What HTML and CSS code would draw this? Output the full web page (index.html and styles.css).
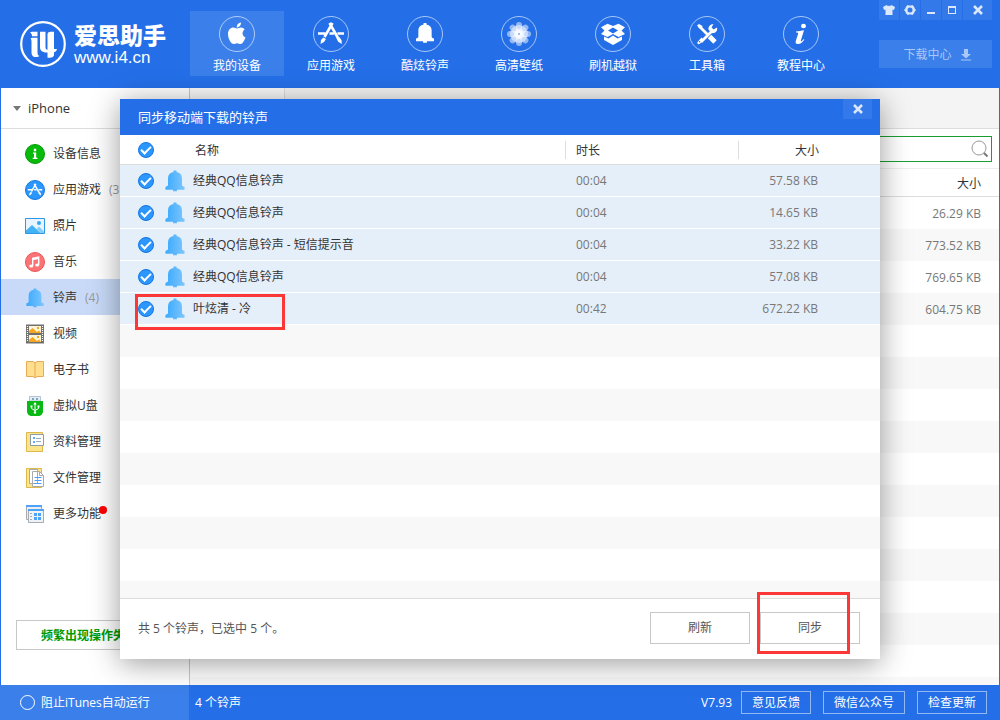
FILE: index.html
```html
<!DOCTYPE html>
<html lang="zh-CN">
<head>
<meta charset="utf-8">
<title>爱思助手</title>
<link rel="stylesheet" href="styles.css">
</head>
<body>
<svg class="defs" aria-hidden="true">
  <defs>
    <linearGradient id="bellFill" x1="0" y1="0" x2="1" y2="0">
      <stop offset="0" stop-color="#3ba9fd"/><stop offset="1" stop-color="#7cc6ff"/>
    </linearGradient>
    <symbol id="bell" viewBox="0 0 20 22">
      <path d="M8.500 2V.5h3V2c3.500.6 5.500 3 5.500 6.200v6.300c0 1.500.8 2 2.500 2.200v3h-7.500v1.500H8v-1.500H.5v-3c1.700-.2 2.500-.7 2.500-2.200V8.200C3 5 5 2.600 8.500 2z"/>
    </symbol>
    <symbol id="appA" viewBox="0 0 36 36">
      <g fill="none" stroke="currentColor" stroke-width="2.600">
        <path d="M19.500 7L11.500 21M16.500 7l8.500 15"/>
        <path d="M5 17.500h7.500M16.500 17.500h4.500M24.500 17.500H31"/>
      </g>
      <path d="M10.200 21.500l2.800 1.500-2 3-3.500 2 .5-4zM26.200 21l-2.700 1.600 1.700 3.200 3.600 2.200-.3-4z" fill="currentColor"/>
    </symbol>
  </defs>
</svg>

<div class="app">
  <header class="topbar">
    <div class="brand">
      <svg class="brand-mark" viewBox="0 0 46 46" aria-hidden="true">
        <circle cx="23" cy="23" r="21.800" fill="none" stroke="#fff" stroke-width="2.200"/>
        <path fill="#fff" d="M10 11.500l2-.8h5.500v4.500h-5.500c0-1.500-.5-2.800-2-3.700zM10.500 17.500l1.500-.8h5.500v14c0 2.500.5 3.800 2 4.300-2.500 2-8 1.500-8-3V20.500c0-1.500-.3-2.300-1-3zM20 10.700h5.500v15c0 2 .5 2.800 2 3V13.500c0-2 1-2.800 3-2.800h3.500V28h3c-.3 1.500-1 3-3 3.300V34c0 2-2.500 2.800-6.500 2.800V31.500c-5 0-7.500-1.500-7.500-5.500z"/>
      </svg>
      <div class="brand-text">
        <strong class="brand-name">爱思助手</strong>
        <span class="brand-url">www.i4.cn</span>
      </div>
    </div>

    <nav class="nav">
      <button class="nav-item nav-active" type="button">
        <svg class="nav-icon" viewBox="0 0 36 36"><circle class="ring" cx="18" cy="18" r="17.500"/><path fill="#fff" d="M18 12.500c1.200 0 2.300-1 4-1 1.500 0 2.900.7 3.700 2-3.200 2-2.700 6.500.8 8-1 2.800-3 6.500-4.900 6.500-1.300 0-1.900-.8-3.500-.8s-2.300.8-3.500.8c-2.300 0-5.600-5-5.600-10 0-4 2.600-6.400 5.400-6.400 1.600 0 2.700.9 3.600.9zM17.800 11.500c-.2-2.600 1.800-4.800 4.200-5 .2 2.600-1.900 5-4.200 5z"/></svg>
        <span>我的设备</span>
      </button>
      <button class="nav-item" type="button">
        <svg class="nav-icon" viewBox="0 0 36 36"><circle class="ring" cx="18" cy="18" r="17.500"/><use href="#appA"/></svg>
        <span>应用游戏</span>
      </button>
      <button class="nav-item" type="button">
        <svg class="nav-icon" viewBox="0 0 36 36"><circle class="ring" cx="18" cy="18" r="17.500"/><use href="#bell" x="8.500" y="6.500" width="19" height="21" fill="#fff"/></svg>
        <span>酷炫铃声</span>
      </button>
      <button class="nav-item" type="button">
        <svg class="nav-icon" viewBox="0 0 36 36"><circle class="ring" cx="18" cy="18" r="17.500"/>
          <g fill="#fff" fill-opacity=".5">
            <rect x="15" y="6" width="6" height="12" rx="3"/><rect x="15" y="18" width="6" height="12" rx="3"/>
            <rect x="6" y="15" width="12" height="6" rx="3"/><rect x="18" y="15" width="12" height="6" rx="3"/>
            <g transform="rotate(45 18 18)"><rect x="15" y="6" width="6" height="12" rx="3"/><rect x="15" y="18" width="6" height="12" rx="3"/><rect x="6" y="15" width="12" height="6" rx="3"/><rect x="18" y="15" width="12" height="6" rx="3"/></g>
            <circle cx="18" cy="18" r="9"/>
          </g>
          <circle cx="18" cy="18" r="5" fill="#fff" fill-opacity=".5"/><circle cx="18" cy="18" r="1" fill="#7fabf3"/>
        </svg>
        <span>高清壁纸</span>
      </button>
      <button class="nav-item" type="button">
        <svg class="nav-icon" viewBox="0 0 36 36"><circle class="ring" cx="18" cy="18" r="17.500"/><path fill="#fff" d="M12.500 7.800l5.500 2.200 5.500-2.200 6.500 3.500-3.500 3.200 3.500 3.500-6.500 3-5.500-3-5.500 3-6.500-3 3.500-3.500-3.500-3.200zM9 20.500l4.500 2 4.500-3 4.500 3 4.500-2V24l-9 5-9-5z"/><path fill="#246fe8" d="M18 11.500l5 3-5 3-5-3z"/></svg>
        <span>刷机越狱</span>
      </button>
      <button class="nav-item" type="button">
        <svg class="nav-icon" viewBox="0 0 36 36"><circle class="ring" cx="18" cy="18" r="17.500"/>
          <path d="M10 10l9 9M12 26l12-12" stroke="#fff" stroke-width="2.800" fill="none"/>
          <path d="M20.500 20.500l5.500 5.500" stroke="#fff" stroke-width="4.800" fill="none"/>
          <path d="M8 9.500L10 8l3.500 2-.5 2.500-2 .5zM19.500 13.500c-.5-3 2-5.800 5-5.300l-2 3 2 2.300 3.500-2c1 3.500-2 6.300-5.500 5.500zM8.500 26l4-4.500 2.500 2.500-4.500 4c-1.500.5-2.500-.5-2-2z" fill="#fff"/>
          <circle cx="10.500" cy="25.800" r=".8" fill="#246fe8"/>
        </svg>
        <span>工具箱</span>
      </button>
      <button class="nav-item" type="button">
        <svg class="nav-icon" viewBox="0 0 36 36"><circle class="ring" cx="18" cy="18" r="17.500"/><ellipse cx="20.500" cy="10" rx="2.500" ry="2.300" fill="#fff"/><path fill="#fff" d="M13 15.500c2.500-.2 5.500-.8 8-1.200l-3.200 10.500c-.3 1 .5.900 1.500-.2l1.500-1.500.5.600c-2 2.800-4.300 4.600-6.800 4.300-1.700-.2-2.200-1.400-1.800-2.800l2.400-7.500c.3-1-.3-1.300-2.100-1.300z"/></svg>
        <span>教程中心</span>
      </button>
    </nav>

    <div class="top-right">
      <div class="win-buttons">
        <button class="win-btn" type="button" aria-label="皮肤"><svg viewBox="0 0 12 12"><path d="M3.500 1c1 1.200 4 1.200 5 0L12 3l-1 3-1.500-.5V11h-7V5.500L1 6 0 3z"/></svg></button>
        <button class="win-btn" type="button" aria-label="设置"><svg viewBox="0 0 12 12"><path fill-rule="evenodd" d="M3.500 1L5 1.500h2L8.500 1l1.700 2 .3 1.200L12 6l-1.500 1.800-.3 1.200-1.700 2L7 10.500H5L3.500 11 1.800 9l-.3-1.200L0 6l1.500-1.800L1.800 3zM6 3.500a2.500 2.500 0 100 5 2.500 2.500 0 000-5z"/></svg></button>
        <button class="win-btn" type="button" aria-label="最小化"><svg viewBox="0 0 12 12"><path d="M2 8h8v2H2z"/></svg></button>
        <button class="win-btn" type="button" aria-label="最大化"><svg viewBox="0 0 12 12"><path fill-rule="evenodd" d="M2 2h8v8H2zM3 4v5h6V4z"/></svg></button>
        <button class="win-btn win-close" type="button" aria-label="关闭"><svg viewBox="0 0 12 12"><path class="cross" d="M2 2l8 8M10 2l-8 8"/></svg></button>
      </div>
      <button class="download" type="button">下载中心
        <svg viewBox="0 0 12 12"><path d="M4 0h4v5h3L6 9.500 1 5h3zM1 10.500h10v1H1z"/></svg>
      </button>
    </div>
  </header>

  <div class="body">
    <aside class="sidebar">
      <div class="device"><span class="caret"></span>iPhone</div>
      <nav class="menu">
        <a class="menu-item" href="#"><svg viewBox="0 0 20 20"><circle cx="10" cy="10" r="9.500" fill="#08bb0b" stroke="#039a08"/><path fill="#fff" d="M8.800 4.800h2.400v2.400H8.800zM8 8.500h3.200v5.300h1.300V15H7.700v-1.200H9V9.700H8z"/></svg>设备信息</a>
        <a class="menu-item" href="#"><svg viewBox="0 0 20 20"><circle cx="10" cy="10" r="9.500" fill="#2b96fb" stroke="#1377dd"/><use class="white" href="#appA" width="20" height="20"/></svg>应用游戏<span class="count">(37)</span></a>
        <a class="menu-item" href="#"><svg viewBox="0 0 20 20"><path fill="#e8f5ff" stroke="#2d97e5" d="M.5 2.500h19v15H.5z"/><path fill="#43b2f4" d="M1 14.500L7 9l8.500 8H1z"/><path fill="#86cef9" d="M11.500 13l2.500-2.500 5 5V17h-3.500z"/><circle cx="14" cy="7" r="2" fill="#36a8ef"/></svg>照片</a>
        <a class="menu-item" href="#"><svg viewBox="0 0 20 20"><circle cx="10" cy="10" r="9.500" fill="#fb7375" stroke="#e95558"/><path fill="none" stroke="#fff" stroke-width="1.400" d="M7.700 14V6.200l6-1.200v8M7.700 7.500l6-1.200"/><ellipse cx="6.200" cy="14" rx="2" ry="1.500" fill="#fff"/><ellipse cx="12.200" cy="13" rx="2" ry="1.500" fill="#fff"/></svg>音乐</a>
        <a class="menu-item menu-active" href="#" aria-current="page"><svg viewBox="0 0 20 22"><use href="#bell" fill="url(#bellFill)"/></svg>铃声<span class="count">(4)</span></a>
        <a class="menu-item" href="#"><svg viewBox="0 0 20 20"><path fill="#707070" d="M1 .5h18v19H1z"/><path fill="#fff3d5" d="M4 2h12v7H4zM4 11h12v7H4z"/><path fill="#f7a71e" d="M4 9V7l3.500-3L12 8l2-1.500L16 9zM4 18v-2l3.500-3 4.500 4 2-1.500 2 2.500zM12 3h2v2h-2zM12 12h2v2h-2z"/><path stroke="#fff" stroke-width="1.200" stroke-dasharray="1 1" d="M2.500 2v16M17.500 2v16"/></svg>视频</a>
        <a class="menu-item" href="#"><svg viewBox="0 0 20 20"><path fill="#ffdf8d" stroke="#e6aa58" d="M1.500 1.500h6.500l2 1.500 2-1.500h6.500v15H12l-2 1.500-2-1.500H1.500z"/><path stroke="#e6aa58" d="M10 3v15"/></svg>电子书</a>
        <a class="menu-item" href="#"><svg viewBox="0 0 20 20"><path fill="#e5edf5" stroke="#b2c4d2" d="M4.500.5h11V5h-11z"/><path fill="#83a4bd" d="M7 2h2v2H7zM11 2h2v2h-2z"/><path fill="#08b813" d="M2 5h16v10c0 3-2 5-5 5H7c-3 0-5-2-5-5z"/><path fill="none" stroke="#fff" d="M10 7v10M6.500 10v2.500l3.500 2 3.500-2V10"/><path fill="#fff" d="M10 6l1.700 2.500H8.300zM5.500 9.500h2v2h-2zM12.500 9.500h2v2h-2z"/><circle cx="10" cy="16.500" r="1.200" fill="#fff"/></svg>虚拟U盘</a>
        <a class="menu-item" href="#"><svg viewBox="0 0 20 20"><path fill="#fbe48a" stroke="#dcb94d" d="M1.500.5h16v19h-16z"/><path fill="#fff" stroke="#8d9aa8" d="M5.500 2.500h13v11h-13z"/><path fill="#55aefa" d="M8 5h2v2H8zM8 9h2v2H8z"/><path stroke="#9ca9b7" d="M11 6.500h5M11 9.500h5"/></svg>资料管理</a>
        <a class="menu-item" href="#"><svg viewBox="0 0 20 20"><path fill="#fbe48a" stroke="#dcb94d" d="M1.500.5h15v19h-15z"/><path fill="#fff" stroke="#aaa" d="M4.500 1.500h8v14h-8zM7.500 3.500h7l4 4v11h-11z"/><path fill="none" stroke="#aaa" d="M14.500 3.500v4h4"/><path stroke="#4f9efc" d="M9.500 9.500h7M9.500 12.500h7M9.500 15.500h7"/></svg>文件管理</a>
        <a class="menu-item" href="#"><svg viewBox="0 0 20 20"><path fill="#eee" stroke="#aaa" d="M1.500 1.500h15v14h-15z"/><path fill="#4ba4fa" d="M1 1h16v2H1z"/><path fill="#f0f3f6" stroke="#a4adb6" d="M3.500 5.500h15v13h-15z"/><path fill="#4ba4fa" d="M3 5h16v2H3zM9 9h3v3H9zM13 9h3v3h-3zM9 13h3v3H9zM13 13h3v3h-3z"/><path stroke="#aaa" d="M5 9.500h2M5 12.500h2M5 15.500h2"/></svg><span class="more">更多功能<i class="dot"></i></span></a>
      </nav>
      <button class="help" type="button">频繁出现操作失败？</button>
    </aside>

    <main class="content">
      <div class="tabs"><span class="tab"></span></div>
      <div class="search">
        <input type="text" aria-label="搜索">
        <svg viewBox="0 0 18 18" aria-hidden="true"><circle cx="8" cy="8" r="7" fill="#fff" stroke="#999"/><path d="M13 13l3.500 3.500" stroke="#777" stroke-width="2"/></svg>
      </div>
      <table class="library">
        <thead><tr><th scope="col">大小</th></tr></thead>
        <tbody>
          <tr><td>26.29 KB</td></tr>
          <tr><td>773.52 KB</td></tr>
          <tr><td>769.65 KB</td></tr>
          <tr><td>604.75 KB</td></tr>
        </tbody>
      </table>
      <div class="stripes"></div>
    </main>
  </div>

  <footer class="statusbar">
    <label class="itunes"><input type="radio" class="circle">阻止iTunes自动运行</label>
    <span class="total">4 个铃声</span>
    <span class="version">V7.93</span>
    <button class="foot-btn" type="button">意见反馈</button>
    <button class="foot-btn foot-wide" type="button">微信公众号</button>
    <button class="foot-btn" type="button">检查更新</button>
  </footer>

  <section class="modal" role="dialog" aria-labelledby="modal-title">
    <header class="modal-head">
      <h2 id="modal-title">同步移动端下载的铃声</h2>
      <button class="modal-close" type="button" aria-label="关闭"><svg viewBox="0 0 12 12"><path class="cross" d="M2 2l8 8M10 2l-8 8"/></svg></button>
    </header>
    <div class="modal-list">
      <table class="songs">
        <colgroup><col class="c-check"><col class="c-name"><col class="c-time"><col class="c-size"></colgroup>
        <thead>
          <tr><th scope="col"><input class="check" type="checkbox" checked aria-label="全选"></th><th scope="col" class="h-name">名称</th><th scope="col"><span class="split">时长</span></th><th scope="col" class="num"><span class="split">大小</span></th></tr>
        </thead>
        <tbody>
          <tr><td><input class="check" type="checkbox" checked id="s1"></td><td><label class="song" for="s1"><svg viewBox="0 0 20 22"><use href="#bell" fill="url(#bellFill)"/></svg>经典QQ信息铃声</label></td><td class="time">00:04</td><td class="num">57.58 KB</td></tr>
          <tr><td><input class="check" type="checkbox" checked id="s2"></td><td><label class="song" for="s2"><svg viewBox="0 0 20 22"><use href="#bell" fill="url(#bellFill)"/></svg>经典QQ信息铃声</label></td><td class="time">00:04</td><td class="num">14.65 KB</td></tr>
          <tr><td><input class="check" type="checkbox" checked id="s3"></td><td><label class="song" for="s3"><svg viewBox="0 0 20 22"><use href="#bell" fill="url(#bellFill)"/></svg>经典QQ信息铃声 - 短信提示音</label></td><td class="time">00:04</td><td class="num">33.22 KB</td></tr>
          <tr><td><input class="check" type="checkbox" checked id="s4"></td><td><label class="song" for="s4"><svg viewBox="0 0 20 22"><use href="#bell" fill="url(#bellFill)"/></svg>经典QQ信息铃声</label></td><td class="time">00:04</td><td class="num">57.08 KB</td></tr>
          <tr><td><input class="check" type="checkbox" checked id="s5"></td><td><label class="song" for="s5"><svg viewBox="0 0 20 22"><use href="#bell" fill="url(#bellFill)"/></svg>叶炫清 - 冷</label><i class="mark mark-song"></i></td><td class="time">00:42</td><td class="num">672.22 KB</td></tr>
        </tbody>
      </table>
      <div class="stripes"></div>
    </div>
    <footer class="modal-foot">
      <p>共 5 个铃声，已选中 5 个。</p>
      <button class="action" type="button">刷新</button>
      <button class="action" type="button">同步<i class="mark mark-sync"></i></button>
    </footer>
  </section>
</div>
</body>
</html>
```

FILE: styles.css
```css
* { box-sizing: border-box; }
body {
  margin: 0;
  font: 12px/16px "Open Sans", "Noto Sans CJK SC", sans-serif;
  color: #333;
}
button, input { font: inherit; color: inherit; margin: 0; padding: 0; border: 0; background: none; }
h2, p { margin: 0; font-weight: normal; }
a { color: inherit; text-decoration: none; }
svg { display: block; flex: none; }
table { width: 100%; border-spacing: 0; table-layout: fixed; }
th, td { padding: 0; font-weight: normal; text-align: left; }
.defs { position: absolute; width: 0; height: 0; }
.cross { fill: none; stroke: currentColor; stroke-width: 2.500; }

.app { position: relative; display: flex; flex-direction: column; min-height: 100vh; background: #246fe8; }

/* top bar */
.topbar { display: flex; height: 88px; color: #fff; }
.brand { display: flex; gap: 8px; width: 190px; padding: 21px 0 0 20px; }
.brand-mark { width: 46px; height: 46px; }
.brand-text { display: flex; flex-direction: column; gap: 3px; }
.brand-name { font: 900 23px/26px "Noto Sans CJK SC", sans-serif; }
.brand-url { font: 17px/16px "Liberation Sans", sans-serif; }
.nav { display: flex; padding-top: 11px; }
.nav-item { display: flex; flex-direction: column; align-items: center; gap: 6px; width: 94px; height: 65px; padding-top: 5px; }
.nav-active { background: #3b7fea; }
.nav-icon { width: 36px; height: 36px; color: #fff; }
.ring { fill: none; stroke: #fff; stroke-opacity: .6; }
.top-right { display: flex; flex-direction: column; align-items: flex-end; gap: 20px; margin-left: auto; padding-right: 8px; }
.win-buttons { display: flex; gap: 1px; color: #dbe8fc; }
.win-btn { display: grid; place-items: center; width: 20px; height: 20px; background: #3479e9; }
.win-btn svg { width: 12px; height: 12px; fill: currentColor; }
.win-close { width: 29px; }
.download { display: flex; align-items: center; justify-content: center; gap: 8px; width: 113px; height: 28px; padding: 2px 0 0 4px; background: #3b7fea; color: #a9c8f8; }
.download svg { width: 12px; height: 12px; fill: currentColor; }

/* body */
.body { flex: 1; display: flex; margin: 0 1px; background: #fff; }
.sidebar { display: flex; flex-direction: column; width: 189px; border-right: 1px solid #c8c8c8; }
.device { display: flex; align-items: center; gap: 7px; height: 41px; padding-left: 12px; border-bottom: 1px solid #ddd; font-size: 13px; }
.caret { border: 4px solid transparent; border-top: 5px solid #777; border-bottom: 0; }
.menu { padding-top: 6px; }
.menu-item { display: flex; align-items: center; gap: 8px; height: 36px; padding: 1px 0 0 24px; }
.menu-item svg { width: 20px; height: 20px; }
.menu-active { background: #c8daf8; }
.white { color: #fff; }
.count { color: #999; }
.more { position: relative; }
.dot { position: absolute; top: 0; right: -6px; width: 8px; height: 8px; border-radius: 50%; background: #f00; }
.help { height: 30px; margin: auto 15px 35px; padding-top: 2px; border: 1px solid #c8c8c8; color: #090; font-weight: bold; }
.content { flex: 1; display: flex; flex-direction: column; }
.tabs { display: flex; height: 41px; background: #f4f4f4; border-bottom: 1px solid #ddd; }
.tab { width: 95px; background: #fafafa; border-right: 1px solid #ddd; }
.search { display: flex; align-items: center; height: 26px; margin: 7px 7px 6px 400px; padding-right: 2px; border: 1px solid #1a9e32; }
.search input { flex: 1; min-width: 0; outline: 0; }
.search svg { width: 18px; height: 18px; }
.library { border-top: 1px solid #eee; }
.library th { height: 28px; padding: 2px 18px 0 0; text-align: right; border-bottom: 1px solid #ddd; }
.library td { height: 32px; padding: 1px 18px 0 0; text-align: right; color: #777; }
.library tbody tr:nth-child(even) { background: #f8f8f8; }
.stripes { flex: 1; background: repeating-linear-gradient(#f8f8f8 0 32px, #fff 32px 64px); }
.content .stripes { background: repeating-linear-gradient(#fff 0 32px, #f8f8f8 32px 64px); }

/* status bar */
.statusbar { display: flex; align-items: center; height: 35px; padding-right: 13px; color: #fff; }
.itunes { display: flex; align-items: center; gap: 6px; align-self: stretch; width: 189px; padding-left: 20px; background: #3b7fea; }
.circle { appearance: none; width: 15px; height: 15px; border: 1px solid #fff; border-radius: 50%; }
.total { padding-left: 6px; }
.version { margin-left: auto; padding-right: 9px; }
.foot-btn { width: 70px; height: 23px; border: 1px solid #91b7f4; }
.foot-btn + .foot-btn { margin-left: 12px; }
.foot-wide { width: 82px; }

/* dialog */
.modal {
  position: absolute; inset: 99px 120px 61px;
  display: flex; flex-direction: column;
  background: #fff;
  box-shadow: 0 4px 28px rgba(0, 0, 0, .4);
}
.modal-head { display: flex; justify-content: space-between; height: 36px; padding: 0 8px 0 18px; background: #246fe8; color: #fff; }
.modal-head h2 { font-size: 13px; line-height: 36px; }
.modal-close { display: grid; place-items: center; width: 29px; height: 20px; background: #3479e9; color: #dbe8fc; }
.modal-close svg { width: 12px; height: 12px; }
.modal-list { flex: 1; display: flex; flex-direction: column; }
.c-check { width: 45px; }
.c-time { width: 173px; }
.c-size { width: 142px; }
.songs th { height: 30px; border-bottom: 1px solid #ddd; }
.songs td { position: relative; height: 32px; background: #e5effa; border-bottom: 1px solid #fff; }
.songs .h-name { padding: 2px 0 0 30px; }
.songs .time, .songs td.num { color: #777; }
.songs .time { padding: 1px 0 0 11px; }
.songs .num { padding: 1px 62px 0 0; text-align: right; }
.split { display: block; padding: 2px 0 0 10px; border-left: 1px solid #ddd; }
.num .split { margin-right: -1px; }
.check {
  appearance: none; display: grid; place-items: center;
  width: 16px; height: 16px; margin-left: 18px;
  border: 1px solid #1377e5; border-radius: 50%; background: #2b96fb;
}
.check::before { content: ""; width: 8px; height: 4px; border: solid #fff; border-width: 0 0 2px 2px; transform: translateY(-1px) rotate(-45deg); }
.song { display: flex; align-items: center; gap: 8px; padding-top: 1px; }
.song svg { width: 20px; height: 22px; }
.modal-foot { display: flex; align-items: center; gap: 10px; height: 61px; padding: 0 20px 2px 18px; border-top: 1px solid #ddd; color: #555; }
.modal-foot p { margin-right: auto; padding-top: 2px; }
.action { position: relative; width: 100px; height: 32px; border: 1px solid #c8c8c8; }

/* highlight frames */
.mark { position: absolute; z-index: 1; border: 3px solid #fc3737; pointer-events: none; }
.mark-song { top: 1px; left: -30px; width: 150px; height: 36px; }
.mark-sync { top: -21px; left: -4px; width: 93px; height: 62px; }
```
